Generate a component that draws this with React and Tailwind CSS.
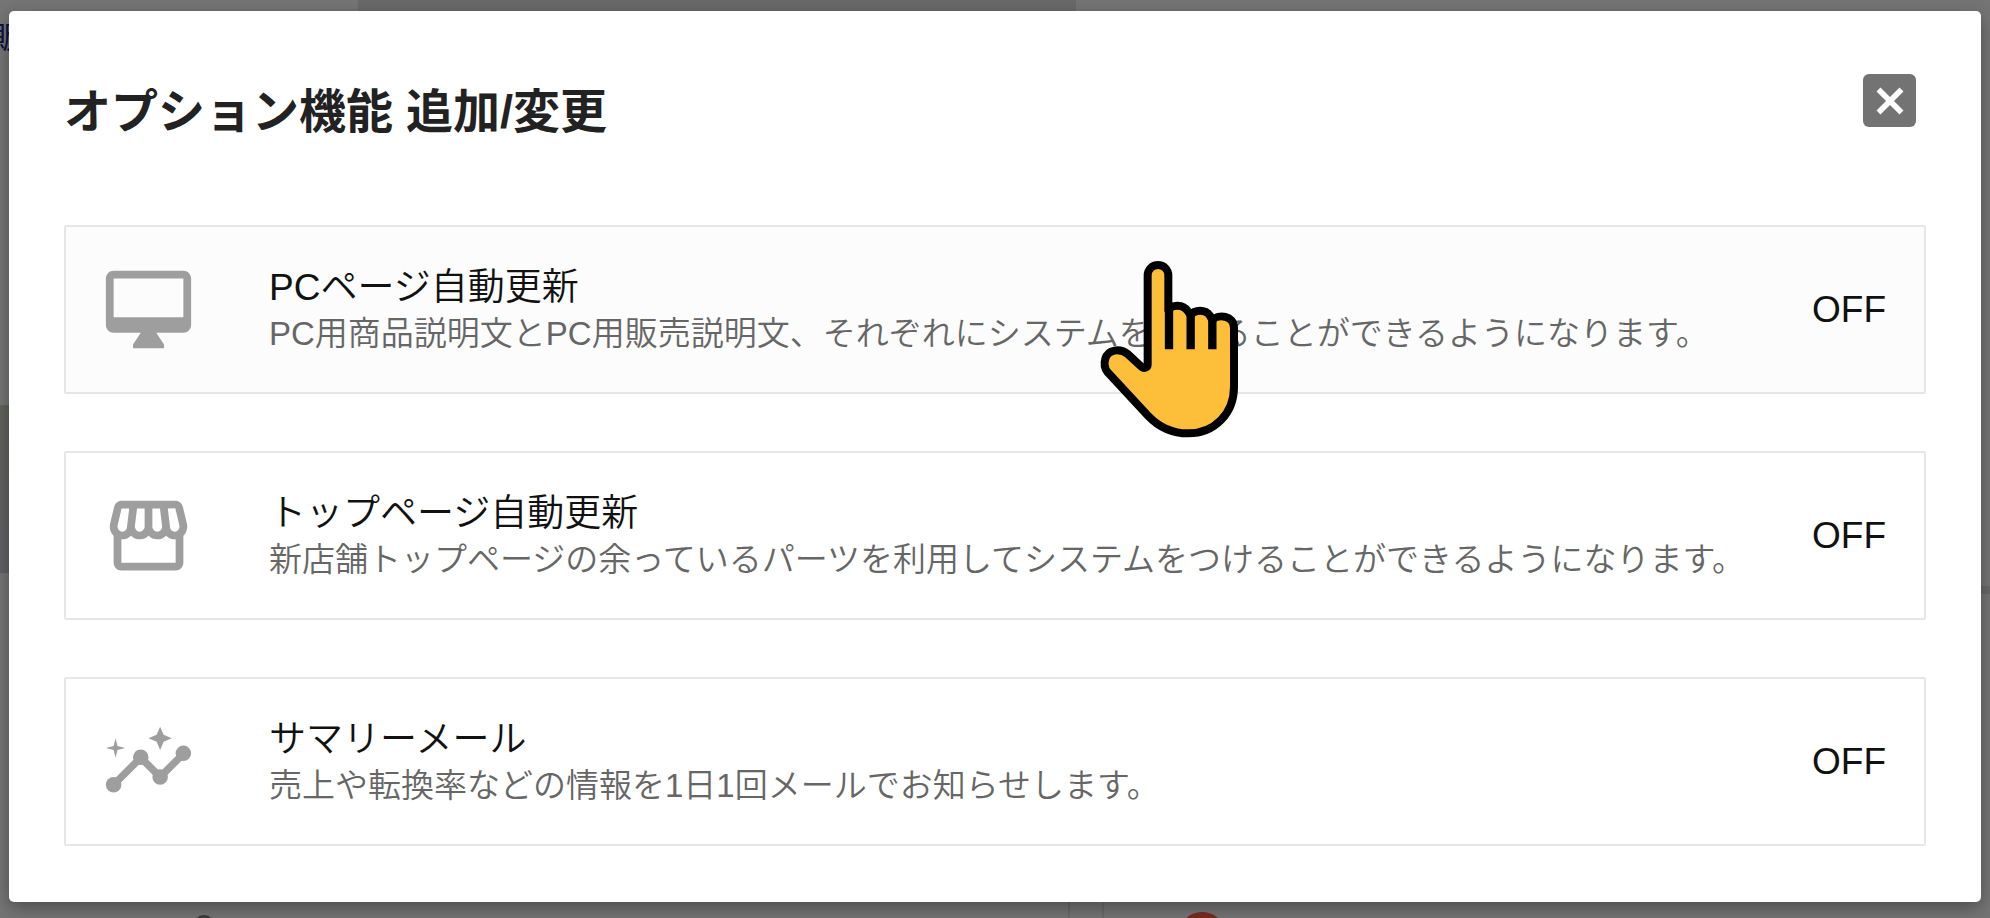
import React from 'react';
import { MdOutlineStorefront } from 'react-icons/md';

const DesktopIcon = (props) => (
  <svg viewBox="0 0 24 24" fill="currentColor" {...props}>
    <path d="M21 2H3c-1.1 0-2 .9-2 2v12c0 1.1.9 2 2 2h7l-2 3v1h8v-1l-2-3h7c1.1 0 2-.9 2-2V4c0-1.1-.9-2-2-2zm0 12H3V4h18v10z" />
  </svg>
);

const InsightsIcon = (props) => (
  <svg viewBox="0 0 24 24" fill="currentColor" {...props}>
    <path d="M3 18L10 11L15 16L21 10" fill="none" stroke="currentColor" strokeWidth="1.9" />
    <circle cx="3" cy="18" r="2" />
    <circle cx="10" cy="10.9" r="2" />
    <circle cx="15" cy="16" r="2" />
    <circle cx="21" cy="9.9" r="2" />
    <path d="M15 3L15.9 5.1L18 6L15.9 6.9L15 9L14.1 6.9L12 6L14.1 5.1Z" />
    <path d="M3.5 6L4 8L6 8.5L4 9L3.5 11L3 9L1 8.5L3 8Z" />
  </svg>
);

const options = [
  {
    title: 'PCページ自動更新',
    description: 'PC用商品説明文とPC用販売説明文、それぞれにシステムをつけることができるようになります。',
    icon: DesktopIcon,
    status: 'OFF',
    active: true,
  },
  {
    title: 'トップページ自動更新',
    description: '新店舗トップページの余っているパーツを利用してシステムをつけることができるようになります。',
    icon: MdOutlineStorefront,
    status: 'OFF',
  },
  {
    title: 'サマリーメール',
    description: '売上や転換率などの情報を1日1回メールでお知らせします。',
    icon: InsightsIcon,
    status: 'OFF',
  },
];

const OptionRow = ({ title, description, icon: Icon, status, active }) => (
  <button
    type="button"
    className={`flex w-full items-center rounded-xs border-2 border-[#e6e6e6] py-9 pr-[38px] pl-9 text-left ${active ? 'bg-[#fcfcfc]' : 'bg-white'}`}
  >
    <Icon className="size-[93px] shrink-0 text-[#9e9e9e]" aria-hidden="true" />
    <span className="ml-[74px] flex min-w-0 flex-1 flex-col">
      <span className="text-[37px] leading-[48px] text-[#111]">{title}</span>
      <span className="text-[33px] leading-[44px] text-[#666]">{description}</span>
    </span>
    <span className="text-[37px] leading-[48px] text-[#111]">{status}</span>
  </button>
);

/* What is left visible of the dimmed page around the dialog */
const Backdrop = () => (
  <div className="absolute inset-0 overflow-hidden bg-[#757575]" aria-hidden="true">
    <div className="absolute top-0 left-[358px] h-3 w-[718px] bg-[#6a6a6a]" />
    <div className="absolute top-[405px] left-0 h-[168px] w-3 bg-linear-to-b from-[#60625c] to-[#626266]" />
    <div className="absolute top-[586px] right-0 h-2 w-3 bg-[#696969]" />
    <div className="absolute top-5 -left-2 text-[30px] leading-9 font-normal text-[#0c1240]">販</div>
    <div className="absolute -bottom-[19px] left-[193px] size-[22px] rounded-full bg-[#3a3a3a]" />
    <div className="absolute bottom-0 left-[1068px] h-4 w-[36px] border-x-2 border-[#6a6a6a]" />
    <div className="absolute -bottom-[42px] left-[1178px] size-12 rounded-full bg-[#7d2a1e]" />
  </div>
);

/* Pointing hand, drawn over the first option */
const Pointer = () => (
  <svg
    viewBox="0 0 540 630"
    className="pointer-events-none absolute top-[240px] left-[1080px] h-[210px] w-[180px]"
    aria-hidden="true"
  >
    <path
      d="M203 106a31 31 0 0 1 62 0V210C275 194 309 190 324 214L332 226C344 208 376 208 389 226L397 240C414 222 462 225 462 264V440C462 520 404 580 325 580C277 580 237 562 204 527L83 397C72 384 72 370 76 356C84 328 119 324 143 342L184 380C192 388 203 381 203 374Z"
      fill="#fdbf3a"
      stroke="#000"
      strokeWidth="24"
      strokeLinejoin="round"
    />
    <path d="M267 200V328M332 220V328M397 236V328" fill="none" stroke="#000" strokeWidth="25" />
  </svg>
);

export default function App() {
  return (
    <div className="relative flex min-h-screen flex-col px-[9px] pt-[11px] pb-4 font-['Liberation_Sans','Noto_Sans_CJK_JP',sans-serif] font-[350]">
      <Backdrop />
      <section
        role="dialog"
        aria-labelledby="options-title"
        className="relative flex-1 rounded-[5px] bg-white px-[55px] pb-14 shadow-[0_6px_18px_rgba(0,0,0,0.35)]"
      >
        <header className="flex items-start justify-between pt-[63px] pb-[91px]">
          <h1 id="options-title" className="pt-4 text-[47px] leading-[44px] font-bold text-[#222]">
            オプション機能 追加/変更
          </h1>
          <button
            type="button"
            aria-label="閉じる"
            className="mr-2.5 flex size-[53px] items-center justify-center rounded-md bg-[#737373]"
          >
            <svg viewBox="0 0 28 28" className="size-7" fill="none" stroke="#fff" strokeWidth="5.6">
              <path d="M2.5 2.5l23 23M25.5 2.5l-23 23" />
            </svg>
          </button>
        </header>
        <div className="flex flex-col gap-[57px]">
          {options.map((option) => (
            <OptionRow key={option.title} {...option} />
          ))}
        </div>
      </section>
      <Pointer />
    </div>
  );
}
